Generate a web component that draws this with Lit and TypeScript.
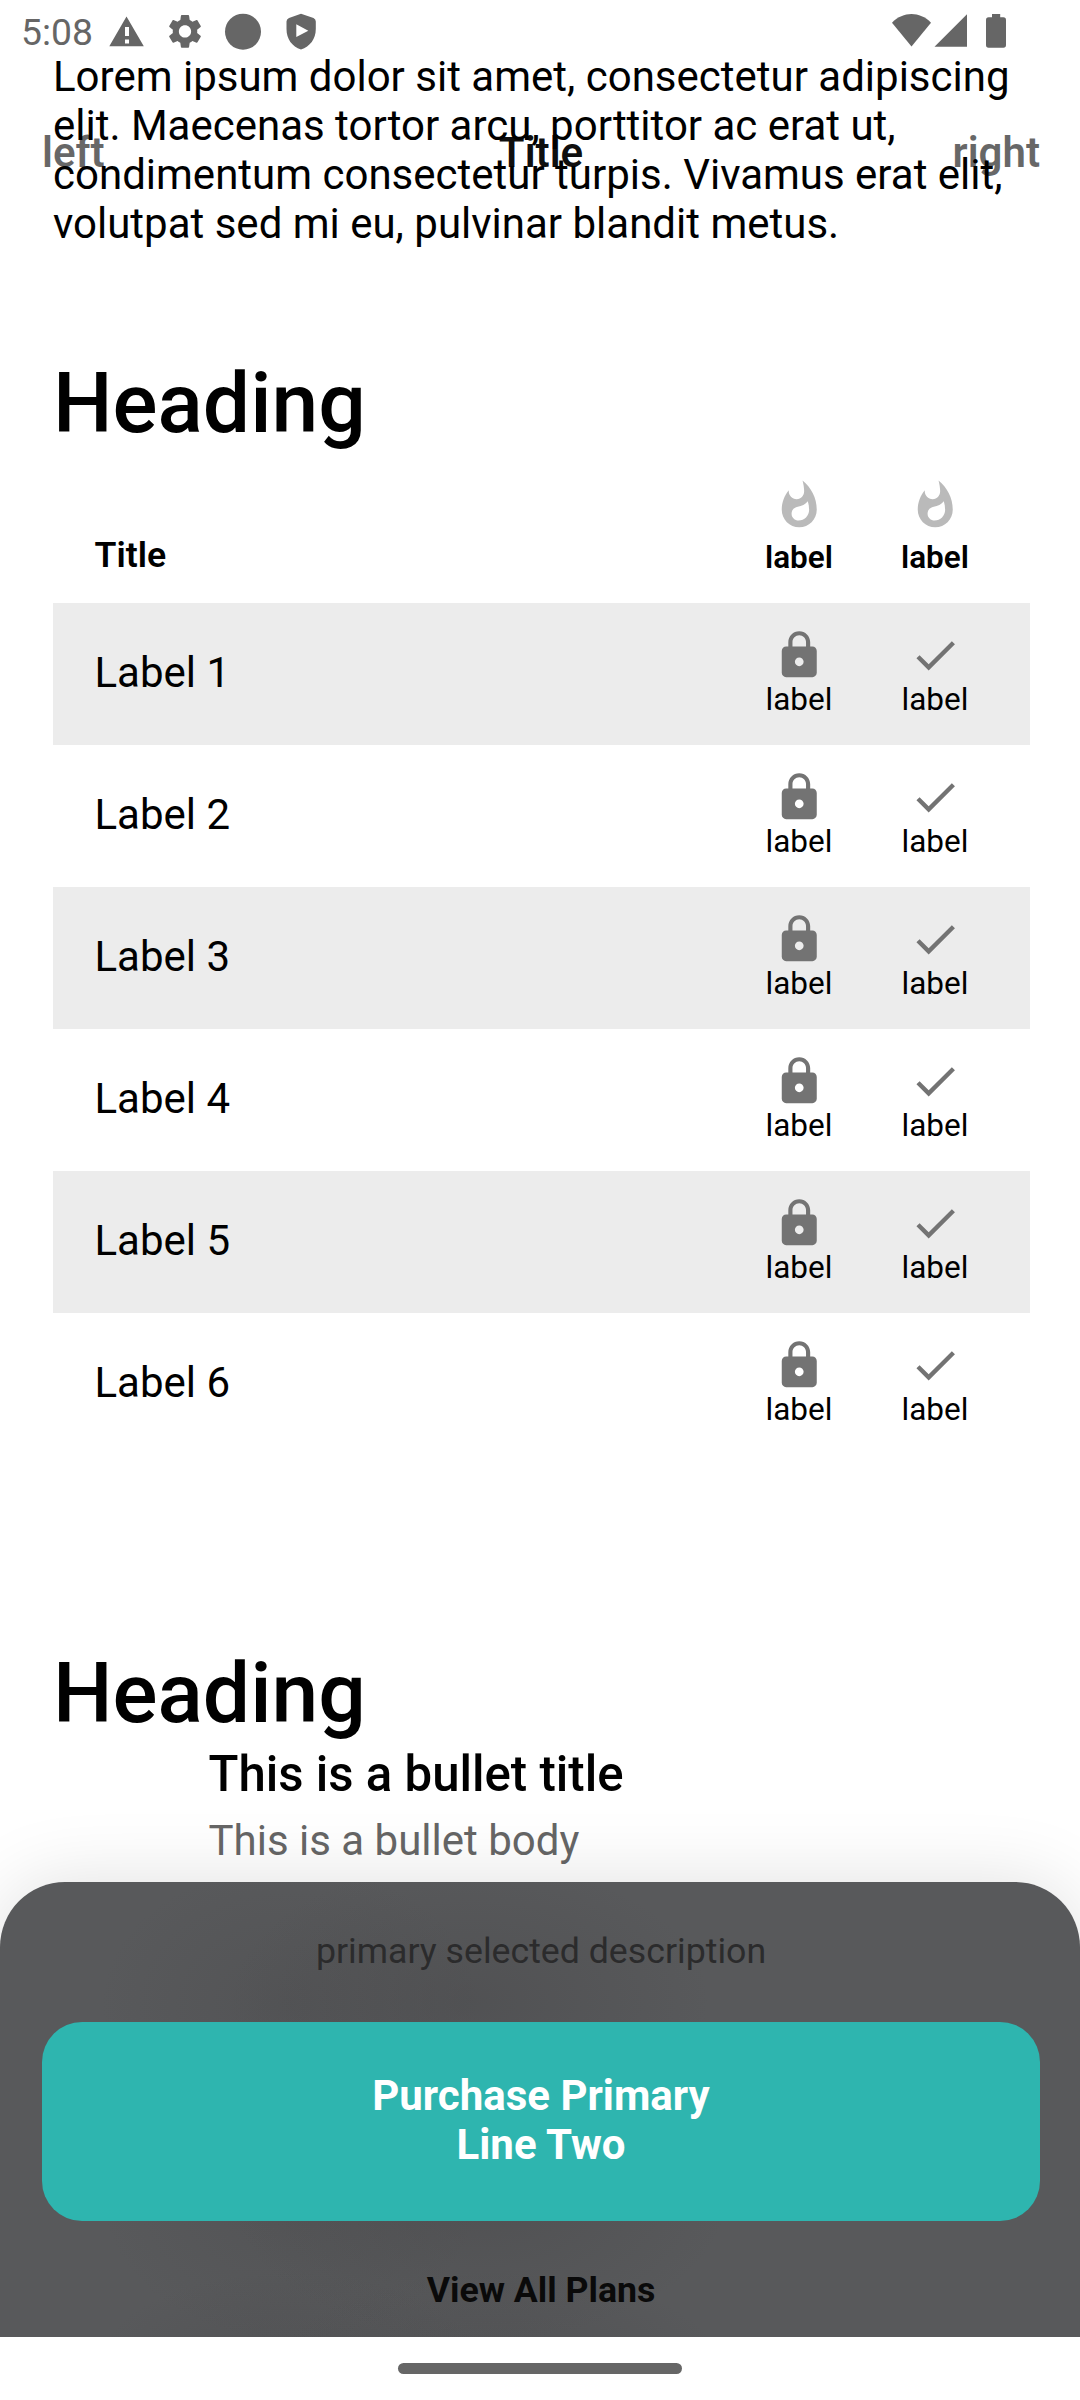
import { LitElement, html, svg, css } from "lit";
import { customElement } from "lit/decorators.js";

const ICONS = {
  fire: "M13.5.67s.74 2.65.74 4.8c0 2.06-1.35 3.73-3.41 3.73-2.07 0-3.63-1.67-3.63-3.73l.03-.36C5.21 7.51 4 10.62 4 14c0 4.42 3.58 8 8 8s8-3.58 8-8C20 8.61 17.41 3.8 13.5.67zM11.71 19c-1.78 0-3.22-1.4-3.22-3.14 0-1.62 1.05-2.76 2.81-3.12 1.77-.36 3.6-1.21 4.62-2.58.39 1.29.59 2.65.59 4.04 0 2.65-2.15 4.8-4.8 4.8z",
  lock: "M18 8h-1V6c0-2.76-2.24-5-5-5S7 3.24 7 6v2H6c-1.1 0-2 .9-2 2v10c0 1.1.9 2 2 2h12c1.1 0 2-.9 2-2V10c0-1.1-.9-2-2-2zm-6 9c-1.1 0-2-.9-2-2s.9-2 2-2 2 .9 2 2-.9 2-2 2zm3.1-9H8.9V6c0-1.71 1.39-3.1 3.1-3.1s3.1 1.39 3.1 3.1v2z",
  check: "M9 16.17L4.83 12l-1.42 1.41L9 19 21 7l-1.41-1.41z",
};

const icon = (name: keyof typeof ICONS) => html`
  <svg class="icon ${name}" viewBox="0 0 24 24"><path d=${ICONS[name]} /></svg>
`;

const cell = (name: keyof typeof ICONS) => html`
  <div class="cell">${icon(name)}<span>label</span></div>
`;

const statusLeft = svg`
  <path d="M126.5 16.5 L143.8 46.3 H109.3 Z M125 27 V36 H129 V27 Z M125 39.5 V43.5 H129 V39.5 Z" fill-rule="evenodd"/>
  <g transform="translate(164.6 11) scale(1.7)">
    <path d="M19.14 12.94c.04-.3.06-.61.06-.94 0-.32-.02-.64-.07-.94l2.03-1.58c.18-.14.23-.41.12-.61l-1.92-3.32c-.12-.22-.37-.29-.59-.22l-2.39.96c-.5-.38-1.03-.7-1.62-.94l-.36-2.54c-.04-.24-.24-.41-.48-.41h-3.84c-.24 0-.43.17-.47.41l-.36 2.54c-.59.24-1.13.57-1.62.94l-2.39-.96c-.22-.08-.47 0-.59.22L2.74 8.87c-.12.21-.08.47.12.61l2.03 1.58c-.05.3-.09.63-.09.94s.02.64.07.94l-2.03 1.58c-.18.14-.23.41-.12.61l1.92 3.32c.12.22.37.29.59.22l2.39-.96c.5.38 1.03.7 1.62.94l.36 2.54c.05.24.24.41.48.41h3.84c.24 0 .44-.17.47-.41l.36-2.54c.59-.24 1.13-.56 1.62-.94l2.39.96c.22.08.47 0 .59-.22l1.92-3.32c.12-.22.07-.47-.12-.61l-2.01-1.58zM12 15.6c-1.98 0-3.6-1.62-3.6-3.6s1.62-3.6 3.6-3.6 3.6 1.62 3.6 3.6-1.62 3.6-3.6 3.6z"/>
  </g>
  <circle cx="243" cy="31.7" r="18"/>
  <path fill-rule="evenodd" d="M301 13.7 L313.5 18 Q315.8 19 315.8 21.5 V29 C315.8 39 310 46.5 301 49.6 C292 46.5 286.5 39 286.5 29 V21.5 Q286.5 19 289 18 Z M296.3 24.3 V37 L308.3 30.7 Z"/>
`;

const statusRight = svg`
  <path d="M892 22.7 C903.5 11.2 919.5 11.2 931 22.7 L911.5 46.6 Z"/>
  <path d="M967 14.3 V46.8 H934.5 Z"/>
  <path d="M992 14 H1000.2 V17.3 H1003.4 Q1006 17.3 1006 20 V45 Q1006 47.7 1003.4 47.7 H988.6 Q986 47.7 986 45 V20 Q986 17.3 988.6 17.3 H992 Z"/>
`;

@customElement("app-root")
export class AppRoot extends LitElement {
  static styles = css`
    :host {
      display: block;
      position: relative;
      width: 1080px;
      height: 2400px;
      overflow: hidden;
      background: #fff;
      color: #000;
      font-family: Roboto, "Liberation Sans", sans-serif;
      font-size: 42px;
      line-height: 49px;
    }
    .content {
      padding: 52px 50px 0 53px;
    }
    p, h2, h3 {
      margin: 0;
      font-weight: 400;
    }
    .lorem {
      white-space: pre;
    }
    h2 {
      font-size: 84px;
      line-height: 98px;
      font-weight: 500;
    }
    .h-first { margin: 107px 0 -2px; }
    .h-second { margin: 190px 0 -2px; }
    .row {
      display: flex;
      align-items: center;
      box-sizing: border-box;
      height: 142px;
      padding: 0 27px 2px 41.5px;
    }
    .row.shaded { background: #ececec; }
    .row.head {
      height: 152px;
      padding-bottom: 0;
      font-weight: 600;
    }
    .name {
      flex: 1;
      padding-bottom: 2px;
    }
    .head .name {
      font-size: 35.7px;
      line-height: 41px;
      align-self: flex-end;
      padding-bottom: 27px;
    }
    .cell {
      width: 136px;
      display: flex;
      flex-direction: column;
      align-items: center;
      font-size: 31.5px;
      line-height: 37px;
    }
    .row .cell { padding-top: 1px; }
    .head .cell { gap: 7px; }
    .icon {
      display: block;
      width: 52.5px;
      height: 52.5px;
      fill: #737373;
    }
    .fire { fill: #bababa; }
    .bullet { padding: 4px 0 0 155.5px; }
    h3 {
      font-size: 49.15px;
      line-height: 58px;
      font-weight: 500;
    }
    .bullet p {
      margin-top: 13px;
      color: #666;
    }
    .status {
      position: absolute;
      inset: 0 0 auto 0;
      height: 63px;
    }
    .status svg {
      position: absolute;
      inset: 0;
      fill: #666;
    }
    .clock {
      position: absolute;
      left: 21px;
      top: 11px;
      font-size: 37.3px;
      line-height: 43px;
      color: #666;
    }
    .bar {
      position: absolute;
      inset: 128px 40px auto 42px;
      display: grid;
      grid-template-columns: 1fr auto 1fr;
      font-weight: 600;
      color: rgba(0, 0, 0, 0.6);
    }
    .bar .title { color: rgba(0, 0, 0, 0.95); }
    .bar .end { text-align: right; }
    .sheet {
      position: absolute;
      inset: 1882px 0 63px;
      box-sizing: border-box;
      padding: 49px 40px 0 42px;
      display: flex;
      flex-direction: column;
      align-items: center;
      border-radius: 65px 65px 0 0;
      background:
        radial-gradient(ellipse 240px 140px at 470px 119px, rgba(70, 70, 72, 0.4), rgba(70, 70, 72, 0)),
        radial-gradient(ellipse 190px 140px at 290px 122px, rgba(70, 70, 72, 0.28), rgba(70, 70, 72, 0)),
        radial-gradient(ellipse 250px 150px at 480px 310px, rgba(70, 70, 72, 0.44), rgba(70, 70, 72, 0)),
        radial-gradient(ellipse 190px 150px at 290px 310px, rgba(70, 70, 72, 0.28), rgba(70, 70, 72, 0)),
        radial-gradient(ellipse 220px 90px at 500px 480px, rgba(70, 70, 72, 0.36), rgba(70, 70, 72, 0)),
        radial-gradient(ellipse 190px 90px at 290px 480px, rgba(70, 70, 72, 0.34), rgba(70, 70, 72, 0)),
        #58595b;
    }
    .shadow {
      position: absolute;
      inset: 1882px 0 63px;
      border-radius: 65px 65px 0 0;
      box-shadow: 0 0 74px rgba(0, 0, 0, 0.125);
      clip-path: inset(-150px 0 0 0);
    }
    .desc {
      font-size: 35.7px;
      line-height: 41px;
      color: #2b2b2c;
    }
    .buy {
      align-self: stretch;
      box-sizing: border-box;
      height: 199px;
      margin-top: 50px;
      padding-bottom: 3px;
      display: flex;
      align-items: center;
      justify-content: center;
      border-radius: 40px;
      background: #2eb5af;
      color: #fff;
      font-weight: 700;
      text-align: center;
    }
    .plans {
      margin-top: 49px;
      font-size: 35.7px;
      line-height: 41px;
      font-weight: 700;
      color: #0a0a0a;
    }
    .nav {
      position: absolute;
      inset: auto 0 0;
      height: 63px;
      background: #fff;
      display: flex;
      align-items: center;
      justify-content: center;
    }
    .pill {
      width: 284px;
      height: 11px;
      border-radius: 5.5px;
      background: #666;
    }
  `;

  render() {
    return html`
      <main class="content">
        <p class="lorem">Lorem ipsum dolor sit amet, consectetur adipiscing
elit. Maecenas tortor arcu, porttitor ac erat ut,
condimentum consectetur turpis. Vivamus erat elit,
volutpat sed mi eu, pulvinar blandit metus.</p>
        <h2 class="h-first">Heading</h2>
        <div class="row head">
          <span class="name">Title</span>${cell("fire")}${cell("fire")}
        </div>
        ${[1, 2, 3, 4, 5, 6].map(
          (n) => html`
            <div class="row ${n % 2 ? "shaded" : ""}">
              <span class="name">Label ${n}</span>${cell("lock")}${cell("check")}
            </div>
          `
        )}
        <h2 class="h-second">Heading</h2>
        <div class="bullet">
          <h3>This is a bullet title</h3>
          <p>This is a bullet body</p>
        </div>
      </main>

      <div class="shadow"></div>
      <section class="sheet">
        <span class="desc">primary selected description</span>
        <div class="buy"><span>Purchase Primary<br />Line Two</span></div>
        <span class="plans">View All Plans</span>
      </section>

      <header class="bar">
        <span>left</span><span class="title">Title</span><span class="end">right</span>
      </header>
      <div class="status">
        <span class="clock">5:08</span>
        <svg width="1080" height="63" viewBox="0 0 1080 63">${statusLeft}${statusRight}</svg>
      </div>
      <div class="nav"><div class="pill"></div></div>
    `;
  }
}
